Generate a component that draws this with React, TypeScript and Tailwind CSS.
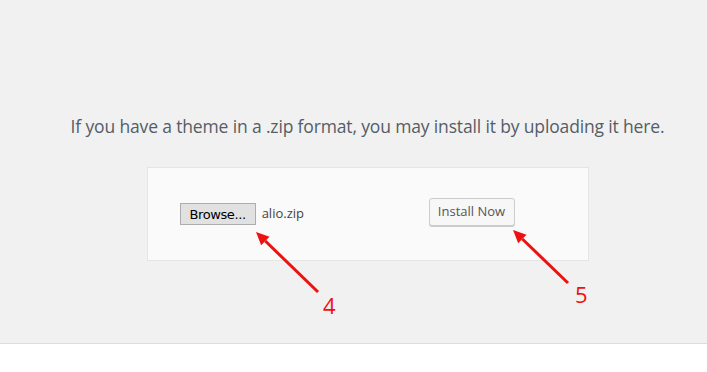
import React from 'react';

const Arrow = ({ x1, y1, x2, y2 }: { x1: number; y1: number; x2: number; y2: number }) => {
  // line from tail (x1,y1) to tip (x2,y2) with a filled head
  const a = Math.atan2(y2 - y1, x2 - x1);
  const len = 13;
  const w = 6;
  const bx = x2 - len * Math.cos(a);
  const by = y2 - len * Math.sin(a);
  const p1 = `${bx + w * Math.sin(a)},${by - w * Math.cos(a)}`;
  const p2 = `${bx - w * Math.sin(a)},${by + w * Math.cos(a)}`;
  return (
    <g>
      <line x1={x1} y1={y1} x2={bx} y2={by} stroke="#ee1111" strokeWidth={3} />
      <polygon points={`${x2},${y2} ${p1} ${p2}`} fill="#ee1111" />
    </g>
  );
};

const App = () => {
  return (
    <div className="relative w-[707px] h-[372px] bg-white font-['Open_Sans','Noto_Sans',sans-serif]">
      <div className="h-[344px] bg-[#f1f1f1] border-b border-[#dddddd] pl-[28px] flex flex-col items-center">
        <p className="mt-[114px] text-[17.5px] leading-[24px] tracking-[-0.15px] text-[#555d66]">
          If you have a theme in a .zip format, you may install it by uploading it here.
        </p>
        <div className="mt-[29px] w-[442px] h-[94px] bg-[#fafafa] border border-[#e5e5e5] flex items-start pl-[32px]">
          <div className="mt-[35px] w-[249px] flex items-center gap-[6px]">
            <button className="h-[22px] px-[9px] bg-[#e1e1e1] border border-[#adadad] text-[13px] text-black leading-none font-['DejaVu_Sans',sans-serif] tracking-[-0.4px]">
              Browse...
            </button>
            <span className="text-[13px] text-[#444]">alio.zip</span>
          </div>
          <button className="mt-[30px] h-[28px] w-[86px] rounded-[3px] bg-[#f7f7f7] border border-[#cccccc] shadow-[0_1px_0_#cccccc] text-[13px] text-[#555555]">
            Install Now
          </button>
        </div>
      </div>

      <svg className="absolute inset-0 pointer-events-none" width={707} height={372}>
        <Arrow x1={318} y1={292} x2={256} y2={232} />
        <Arrow x1={568} y1={283} x2={513} y2={230} />
      </svg>
      <span className="absolute left-[323px] top-[294px] text-[22px] leading-none text-[#ee1111]">4</span>
      <span className="absolute left-[575px] top-[283px] text-[22px] leading-none text-[#ee1111]">5</span>
    </div>
  );
};

export default App;
